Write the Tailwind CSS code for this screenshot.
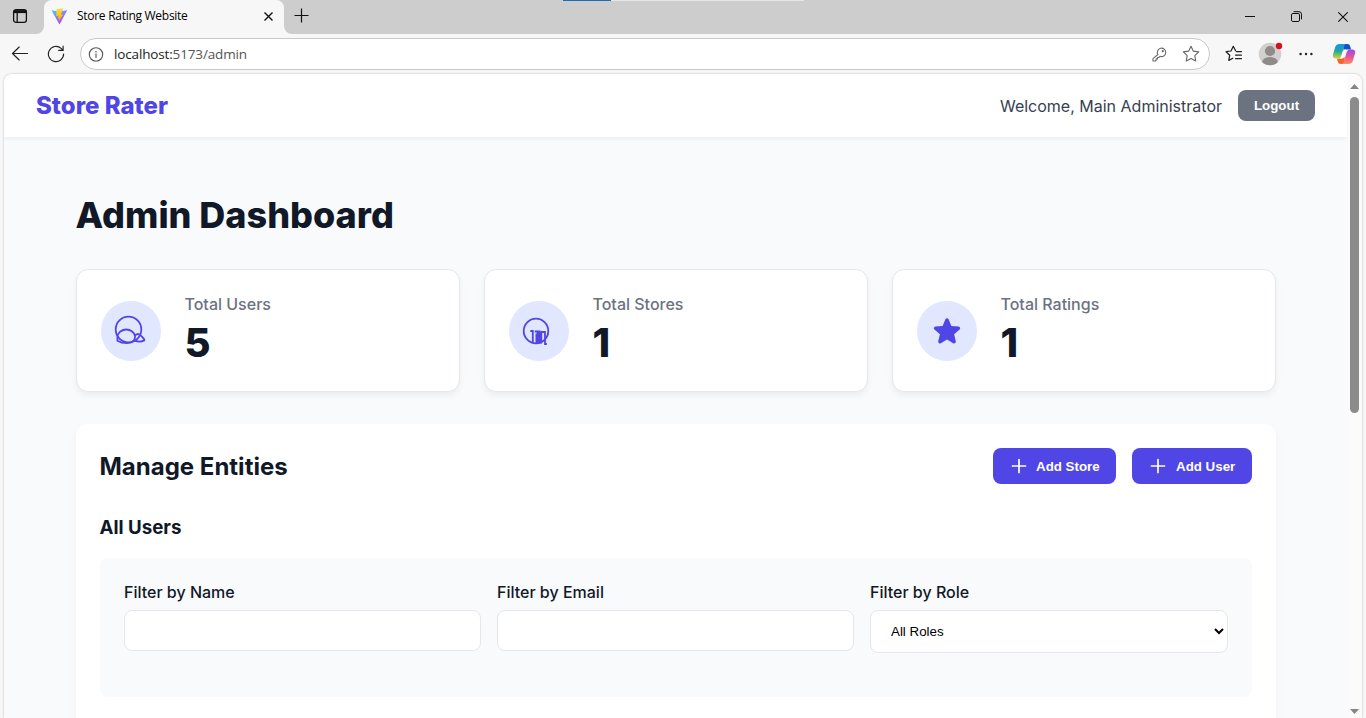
<!DOCTYPE html>
<html lang="en">
<head>
<meta charset="utf-8">
<title>Store Rating Website</title>
<script src="https://cdn.jsdelivr.net/npm/@tailwindcss/browser@4"></script>
</head>
<body class="w-[1366px] h-[718px] overflow-hidden bg-[#f7f7f7] flex flex-col font-['Inter',sans-serif] text-[#111827]">

<!-- Tab strip -->
<div class="relative h-[34px] shrink-0 bg-[#cdcdcd] flex font-['Open_Sans','Noto_Sans',sans-serif]">
  <div class="absolute top-0 left-[563px] w-[241px] h-px bg-[#e6e6e6]"><div class="w-12 h-px bg-[#1f6cb5]"></div></div>
  <div class="w-11 bg-[#f7f7f7]"><div class="h-full bg-[#cdcdcd] rounded-br-lg pl-[12px] pt-2">
    <svg width="16" height="16" viewBox="0 0 16 16" fill="none" stroke="#111" stroke-width="1.3"><rect x="1.6" y="1.7" width="12.8" height="12.6" rx="2.4"/><path d="M1.6 3.6h12.8" stroke-width="3"/><path d="M5.2 4v10"/></svg>
  </div></div>
  <div class="w-60 bg-[#f7f7f7] rounded-t-lg flex items-center pl-[7px] pr-[11px] pb-[2px]">
    <svg width="17" height="17" viewBox="0 0 17 17"><defs><linearGradient id="v" x1="0" y1="0" x2=".6" y2="1"><stop stop-color="#41d1ff"/><stop offset="1" stop-color="#bd34fe"/></linearGradient><linearGradient id="w" x1="0" y1="0" x2="0" y2="1"><stop stop-color="#ffdd35"/><stop offset="1" stop-color="#ffa800"/></linearGradient></defs><path d="M.4 2.2 8 3.6l8.2-1.4L8.5 16.5z" fill="url(#v)"/><path d="M12.300.2 5.500 1.300l-.3 6.900 2.200-.4-.5 2.600 1.400-.3-.7 3.700 4.600-7.600-2.200.4z" fill="url(#w)"/></svg>
    <span class="ml-[9px] text-[12px] tracking-[-0.28px] text-black whitespace-nowrap">Store Rating Website</span>
    <svg class="ml-auto" width="9" height="9" viewBox="0 0 9 9" stroke="#111" stroke-width="1.4"><path d="M.5.5l8 8M8.500.5l-8 8"/></svg>
  </div>
  <div class="grow bg-[#f7f7f7]"><div class="h-full bg-[#cdcdcd] rounded-bl-lg flex items-center pl-[10px] pr-[18px] pb-[2px]">
    <svg class="-mt-px" width="15" height="15" viewBox="0 0 15 15" stroke="#111" stroke-width="1.2"><path d="M7.5.5v14M.5 7.5h14"/></svg>
    <svg class="ml-auto mr-[36px]" width="10" height="10" viewBox="0 0 10 10" stroke="#111"><path d="M0 5.5h10"/></svg>
    <svg class="mr-[36px]" width="11" height="11" viewBox="0 0 11 11" fill="none" stroke="#111"><rect x=".5" y="2.5" width="8" height="8" rx="1.4"/><path d="M2.6.7h5.4a2.5 2.5 0 0 1 2.5 2.5v5.2"/></svg>
    <svg class="mt-px" width="10" height="10" viewBox="0 0 10 10" stroke="#111" stroke-width="1.1"><path d="M.3.3l9.400 9.400M9.700.3l-9.400 9.400"/></svg>
  </div></div>
</div>

<!-- Toolbar -->
<div class="h-10 shrink-0 flex items-center pl-[11px] pr-[10px] font-['Open_Sans','Noto_Sans',sans-serif]">
  <svg width="18" height="16" viewBox="0 0 18 16" fill="none" stroke="#222" stroke-width="1.15" stroke-linecap="round" stroke-linejoin="round"><path d="M16.500 7.500H1.500M8.200 1L1.500 7.500l6.700 6.500"/></svg>
  <svg class="ml-[18px]" width="18" height="18" viewBox="0 0 18 18" fill="none" stroke="#222" stroke-width="1.15" stroke-linecap="round" stroke-linejoin="round"><path d="M16.600 9a7.600 7.600 0 1 1-2.500-5.600l2 2M16.100 1v4.400h-4.400"/></svg>
  <div class="ml-[15px] w-[1130px] h-8 rounded-full border border-[#c9c9c9] bg-white flex items-center pl-[7px] pr-[9px]">
    <svg width="16" height="15" viewBox="0 0 16 15" fill="none" stroke="#555" stroke-width="1.1"><circle cx="8" cy="7.500" r="6.700"/><path d="M8 6.500v4.400M8 4v1.400"/></svg>
    <span class="ml-[10px] text-[13.5px] tracking-[-0.15px] text-[#222]">localhost:<span class="text-[#555]">5173/admin</span></span>
    <svg class="ml-auto" width="15" height="15" viewBox="0 0 15 15" fill="none" stroke="#6b6b6b" stroke-width="1.1" stroke-linejoin="round"><path d="M5.900 7.500A4.200 4.200 0 1 1 8 9.300L6.800 10.500H5.500v1.400H4.200v1.300L3.400 14H1v-2.400z"/><circle cx="10.800" cy="4.200" r=".6"/></svg>
    <svg class="ml-[15px]" width="18" height="18" viewBox="0 0 18 18" fill="none" stroke="#666" stroke-width="1.1" stroke-linejoin="round"><path d="M9 1.300l2.350 4.850 5.350.75-3.900 3.750.95 5.350L9 13.450 4.250 16l.95-5.350L1.300 6.900l5.350-.75z"/></svg>
  </div>
  <svg class="ml-[15px]" width="18" height="18" viewBox="0 0 18 18" fill="none" stroke="#222" stroke-width="1.25" stroke-linejoin="round" stroke-linecap="round"><path d="M10.600 5.800L8.300 1.300 6 6l-4.900.7 3.600 3.500-.9 5.200 4-2.200M11.500 6.500H16.500M10.500 10H16.500M10.500 13.500H16.500"/></svg>
  <svg class="ml-[15px]" width="25" height="24" viewBox="0 0 25 24"><defs><clipPath id="a"><circle cx="12" cy="12" r="11.300"/></clipPath></defs><circle cx="12" cy="12" r="11.300" fill="#d2d0ce"/><g clip-path="url(#a)" fill="#8f8b88"><circle cx="12" cy="9" r="5.100"/><ellipse cx="12" cy="20.700" rx="8" ry="5.800"/></g><circle cx="21" cy="4" r="3.200" fill="#d80f1c"/></svg>
  <svg class="ml-[16px]" width="14" height="4" viewBox="0 0 14 4" fill="#222"><circle cx="1.600" cy="2" r="1.200"/><circle cx="7" cy="2" r="1.200"/><circle cx="12.400" cy="2" r="1.200"/></svg>
  <svg class="ml-auto" width="24" height="22" viewBox="0 0 24 22"><defs><linearGradient id="c1" x1="0" y1="0" x2="0" y2="1"><stop stop-color="#1597e8"/><stop offset=".5" stop-color="#22a5a0"/><stop offset="1" stop-color="#d8d52c"/></linearGradient><linearGradient id="c2" x1="0" y1="0" x2="0" y2="1"><stop stop-color="#8e4bf0"/><stop offset=".5" stop-color="#e9529b"/><stop offset="1" stop-color="#ff8f5a"/></linearGradient></defs>
    <path d="M11 1h4.500q2 0 2.600 2l1 3.500h-5q-2 0-2.600 2z" fill="#1650c8"/><path d="M13 21H8.500q-2 0-2.600-2l-1-3.500h5q2 0 2.600-2z" fill="#f4642f"/>
    <path d="M7.500 1H14q-1.500.7-2 2.500L9.300 13q-.8 2.500-3 2.500H4Q.2 15.500 1 11.500L3.200 4Q4.300 1 7.500 1z" fill="url(#c1)"/><path d="M16.500 21H10q1.500-.7 2-2.500L14.700 9q.8-2.500 3-2.500H20q3.800 0 3 4L20.800 18q-1.100 3-4.300 3z" fill="url(#c2)"/><path d="M11.700 6.500h2.600q-1.300.8-1.800 2.500l-1.500 5q-.4 1.500-2 1.500h-.9q1-.8 1.400-2.200z" fill="#fff"/></svg>
</div>

<!-- Page viewport -->
<div class="grow min-h-0 ml-1 mr-[4px] flex rounded-t-lg overflow-hidden bg-[#f9fafb] shadow-[0_0_2px_rgba(0,0,0,0.3)]">
  <div class="w-[1343px] flex flex-col">
    <header class="h-[63px] shrink-0 bg-white shadow-[0_2px_4px_rgba(0,0,0,0.05)] flex items-center pl-8 pr-8">
      <div class="text-2xl font-extrabold text-[#4f46e5]">Store Rater</div>
      <div class="ml-auto mr-4 text-base text-[#374151] whitespace-nowrap">Welcome, Main Administrator</div>
      <button class="w-[77px] h-[31px] rounded-lg bg-[#6b7280] text-white font-bold text-[13.333px] font-['Liberation_Sans',sans-serif]">Logout</button>
    </header>
    <main class="w-[1200px] ml-[72px] pt-[54px]">
      <h1 class="-ml-[0.500px] text-4xl leading-[48px] font-extrabold">Admin Dashboard</h1>
      <div class="mt-[30px] grid grid-cols-3 gap-6">
        <section class="h-[123px] rounded-xl border border-[#e5e7eb] bg-white shadow-[0_4px_6px_rgba(0,0,0,0.05)] flex items-center px-6">
          <div class="size-[60px] rounded-full bg-[#e0e7ff]"><svg width="60" height="60" viewBox="0 0 60 60" fill="none" stroke="#4f46e5" stroke-width="1.800" stroke-linejoin="round"><circle cx="27.500" cy="28.500" r="12.800"/><path d="M16.400 39.800v-3.500A8.900 8 0 0 1 34.100 35.300Q34.100 42.200 25.500 42.200 20.500 42.200 16.400 39.800zM33.300 35.200q3.700-4.400 7.200 0l2.800 3.200v1q-4.500 2.300-10.300 0"/></svg></div>
          <div class="ml-[23.500px]"><div class="text-base leading-6 font-medium text-[#6b7280]">Total Users</div><div class="text-[40px] leading-[53px] font-extrabold">5</div></div>
        </section>
        <section class="h-[123px] rounded-xl border border-[#e5e7eb] bg-white shadow-[0_4px_6px_rgba(0,0,0,0.05)] flex items-center px-6">
          <div class="size-[60px] rounded-full bg-[#e0e7ff]"><svg width="60" height="60" viewBox="0 0 60 60" fill="none" stroke="#4f46e5" stroke-width="1.800"><circle cx="27" cy="30" r="12.300"/><path d="M21.300 30h2.500v12M25.700 30.500h2.500M32 31h4v12h1.800M32 31v11"/><path d="M26.500 32.500h1.200V29.500h4V31h1.500v11.500h-6.700z" fill="#4f46e5" stroke="none"/></svg></div>
          <div class="ml-[23.500px]"><div class="text-base leading-6 font-medium text-[#6b7280]">Total Stores</div><div class="text-[40px] leading-[53px] font-extrabold">1</div></div>
        </section>
        <section class="h-[123px] rounded-xl border border-[#e5e7eb] bg-white shadow-[0_4px_6px_rgba(0,0,0,0.05)] flex items-center px-6">
          <div class="size-[60px] rounded-full bg-[#e0e7ff] flex items-center justify-center"><svg width="32" height="32" viewBox="0 0 24 24" fill="#4f46e5"><path d="M10.788 3.210c.448-1.077 1.976-1.077 2.424 0l2.082 5.006 5.404.434c1.164.093 1.636 1.545.749 2.305l-4.117 3.527 1.257 5.273c.271 1.136-.964 2.033-1.960 1.425L12 18.354 7.373 21.180c-.996.608-2.231-.290-1.960-1.425l1.257-5.273-4.117-3.527c-.887-.760-.415-2.212.749-2.305l5.404-.434 2.082-5.006z"/></svg></div>
          <div class="ml-[23.500px]"><div class="text-base leading-6 font-medium text-[#6b7280]">Total Ratings</div><div class="text-[40px] leading-[53px] font-extrabold">1</div></div>
        </section>
      </div>

      <section class="mt-8 h-[400px] rounded-xl bg-white p-6 shadow-[0_4px_6px_rgba(0,0,0,0.05)]">
        <div class="flex items-center h-9">
          <h2 class="text-2xl font-bold pt-[2px] -ml-[0.500px]">Manage Entities</h2>
          <div class="ml-auto flex gap-4 font-['Liberation_Sans',sans-serif] text-[13.333px] font-bold text-white">
            <button class="w-[123px] h-9 rounded-lg bg-[#4f46e5] flex items-center pl-4"><svg width="20" height="20" viewBox="0 0 20 20" stroke="#fff" stroke-width="1.700" stroke-linecap="round"><path d="M10 3.500v13M3.500 10h13"/></svg><span class="ml-[7px] pt-px">Add Store</span></button>
            <button class="w-[120px] h-9 rounded-lg bg-[#4f46e5] flex items-center pl-4"><svg width="20" height="20" viewBox="0 0 20 20" stroke="#fff" stroke-width="1.700" stroke-linecap="round"><path d="M10 3.500v13M3.500 10h13"/></svg><span class="ml-2 pt-px">Add User</span></button>
          </div>
        </div>
        <h3 class="mt-[29px] -ml-[0.500px] text-[18.720px] leading-[30px] font-bold">All Users</h3>
        <div class="mt-[15px] h-[139px] rounded-lg bg-[#f9fafb] p-6 grid grid-cols-[357px_357px_358px] gap-4">
          <label class="block text-base leading-5 font-medium">Filter by Name<input type="text" class="block mt-2 w-full h-[41px] rounded-lg border border-[#e5e7eb] bg-white"></label>
          <label class="block text-base leading-5 font-medium">Filter by Email<input type="text" class="block mt-2 w-full h-[41px] rounded-lg border border-[#e5e7eb] bg-white"></label>
          <label class="block text-base leading-5 font-medium">Filter by Role
            <select class="block mt-2 w-full h-[43px] rounded-lg border border-[#e5e7eb] bg-white pl-4 font-['Liberation_Sans',sans-serif] text-[13.333px] font-normal text-black"><option>All Roles</option></select></label>
        </div>
      </section>
    </main>
  </div>
  <!-- Scrollbar -->
  <div class="w-[15px] bg-[#fbfbfb] flex flex-col items-center pt-[10px] pb-[4px]">
    <svg width="9" height="5" viewBox="0 0 9 5" fill="#858585"><path d="M4.500 0L9 5H0z"/></svg>
    <div class="mt-2 w-[9px] h-[316px] rounded-full bg-[#8b8b8b]"></div>
    <svg class="mt-auto" width="9" height="5" viewBox="0 0 9 5" fill="#858585"><path d="M4.500 5L9 0H0z"/></svg>
  </div>
</div>
</body>
</html>
